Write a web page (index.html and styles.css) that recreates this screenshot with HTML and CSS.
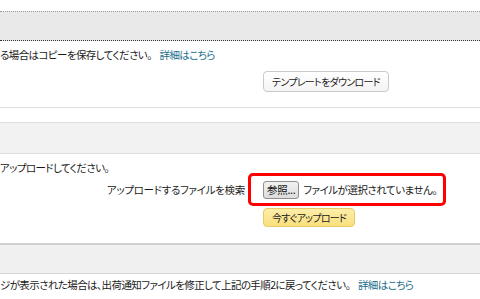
FILE: index.html
```html
<!DOCTYPE html>
<html lang="ja">
<head>
    <meta charset="UTF-8">
    <meta name="viewport" content="width=device-width, initial-scale=1.0">
    <title>出荷通知のアップロード</title>
    <link rel="stylesheet" href="styles.css">
</head>
<body>
    <div class="band band-top"></div>

    <div class="section section-template">
        <p class="note">る場合はコピーを保存してください。 <a href="#">詳細はこちら</a></p>
        <div class="form-row">
            <div class="label"></div>
            <div class="value"><button class="btn">テンプレートをダウンロード</button></div>
        </div>
    </div>

    <div class="divider"></div>
    <div class="band band-mid"></div>

    <div class="section section-upload">
        <p class="note">アップロードしてください。</p>
        <div class="form-row">
            <div class="label">アップロードするファイルを検索</div>
            <div class="highlight">
                <button class="btn-file">参照...</button>
                <span class="file-name">ファイルが選択されていません。</span>
            </div>
        </div>
        <div class="form-row">
            <div class="label"></div>
            <div class="value"><button class="btn btn-primary">今すぐアップロード</button></div>
        </div>
    </div>

    <div class="band band-bottom"></div>

    <div class="section section-errors">
        <p class="note">ジが表示された場合は、出荷通知ファイルを修正して上記の手順2に戻ってください。 <a href="#">詳細はこちら</a></p>
    </div>
</body>
</html>
```

FILE: styles.css
```css
body {
    margin: 0;
    font-family: "Noto Sans CJK JP", sans-serif;
    font-size: 10.5px;
    letter-spacing: -0.3px;
    color: #1a1a1a;
    font-feature-settings: "palt";
    overflow: hidden;
}
.band {
    background-color: #f0f0f0;
}
.band-top {
    margin-top: 11px;
    height: 28px;
    background-color: #e9e9e9;
    border-top: 1px dotted #9a9a9a;
    border-bottom: 1px dotted #333;
}
.divider {
    height: 14px;
    border-top: 1px solid #ddd;
}
.band-mid {
    height: 30px;
    background-color: #f2f2f2;
    border-top: 1px solid #ddd;
    border-bottom: 1px solid #ddd;
}
.band-bottom {
    height: 28px;
    border-top: 2px solid #d0d0d0;
    border-bottom: 1px solid #d8d8d8;
}
.section-template {
    padding: 6px 0 15px;
}
.section-upload {
    padding: 8px 0 16px;
}
.section-errors {
    padding: 5px 0 0;
}
.note {
    margin: 0;
    line-height: 12px;
    letter-spacing: -0.6px;
    white-space: nowrap;
}
.section-upload .note {
    margin-bottom: -1px;
}
.section-template .note {
    line-height: 16px;
    margin-bottom: 8px;
}
.note a {
    color: #1b6e8b;
    text-decoration: none;
    margin-left: 6px;
}
.form-row {
    display: grid;
    grid-template-columns: 245px auto;
    column-gap: 3px;
    align-items: center;
    justify-content: start;
}
.label {
    text-align: right;
    white-space: nowrap;
}
.value {
    padding-left: 15px;
}
.btn {
    font-family: inherit;
    font-size: 10px;
    letter-spacing: -0.7px;
    font-feature-settings: "palt";
    color: #222;
    height: 21px;
    padding: 0 8px;
    background: linear-gradient(#fff, #f4f4f4);
    border: 1px solid #c9c9c9;
    border-radius: 4px;
}
.btn-primary {
    height: 19px;
    margin-top: 2px;
    background: linear-gradient(#fdeea8, #f9e07e);
    border-color: #e6cb68;
}
.highlight {
    display: flex;
    align-items: center;
    gap: 4px;
    height: 27px;
    padding: 0 6px 0 12px;
    border: 3px solid #f00;
    border-radius: 5px;
    white-space: nowrap;
}
.file-name {
    letter-spacing: -0.5px;
}
.btn-file {
    font-family: inherit;
    font-size: 10.5px;
    letter-spacing: -0.3px;
    font-feature-settings: "palt";
    color: #111;
    height: 18px;
    padding: 0 3px;
    background: linear-gradient(#f2f2f2, #dcdcdc);
    border: 1px solid #8f8f8f;
    border-radius: 3px;
}
```
